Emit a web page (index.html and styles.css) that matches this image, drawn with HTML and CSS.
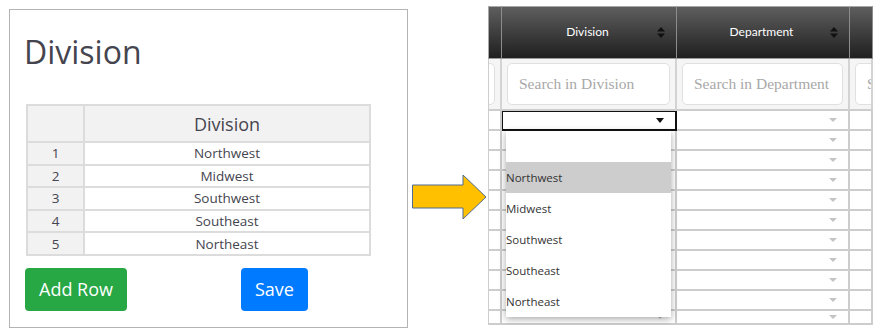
FILE: index.html
```html
<!DOCTYPE html>
<html>
<head>
<meta charset="utf-8">
<link rel="stylesheet" href="styles.css">
</head>
<body>
<div class="page">
  <section class="panel">
    <h1 class="title">Division</h1>
    <table class="sheet">
      <thead>
        <tr><th class="idx"></th><th>Division</th></tr>
      </thead>
      <tbody>
        <tr><td class="idx">1</td><td>Northwest</td></tr>
        <tr><td class="idx">2</td><td>Midwest</td></tr>
        <tr><td class="idx">3</td><td>Southwest</td></tr>
        <tr><td class="idx">4</td><td>Southeast</td></tr>
        <tr><td class="idx">5</td><td>Northeast</td></tr>
      </tbody>
    </table>
    <div class="actions">
      <button class="btn btn-green">Add Row</button>
      <button class="btn btn-blue">Save</button>
    </div>
  </section>

  <svg class="arrow" width="76" height="48" viewBox="0 0 76 48">
    <polygon points="1.5,12 52,12 52,2 75,24 52,46 52,35 1.5,35" fill="#ffc000" stroke="#4f6b93" stroke-width="1"/>
  </svg>

  <section class="grid">
    <div class="row head">
      <div class="c c0"></div>
      <div class="c c1"><span></span><span class="hlabel">Division</span><svg class="sort" width="8" height="11" viewBox="0 0 8 11"><polygon points="0,4.5 4,0 8,4.5" fill="#111"/><polygon points="0,6.5 8,6.5 4,11" fill="#111"/></svg></div>
      <div class="c c2"><span></span><span class="hlabel">Department</span><svg class="sort" width="8" height="11" viewBox="0 0 8 11"><polygon points="0,4.5 4,0 8,4.5" fill="#111"/><polygon points="0,6.5 8,6.5 4,11" fill="#111"/></svg></div>
      <div class="c c3"></div>
    </div>
    <div class="row filter">
      <div class="c c0"><div class="search search-stub"></div></div>
      <div class="c c1"><div class="search">Search in Division</div></div>
      <div class="c c2"><div class="search">Search in Department</div></div>
      <div class="c c3"><div class="search search-clip">S</div></div>
    </div>
    <div class="row body">
      <div class="c c0"></div>
      <div class="c c1 selected"><i class="caret dark"></i>
        <ul class="dropdown">
          <li></li>
          <li class="hl">Northwest</li>
          <li>Midwest</li>
          <li>Southwest</li>
          <li>Southeast</li>
          <li>Northeast</li>
        </ul>
      </div>
      <div class="c c2"><i class="caret"></i></div>
      <div class="c c3"></div>
    </div>
    <div class="row body"><div class="c c0"></div><div class="c c1"><i class="caret"></i></div><div class="c c2"><i class="caret"></i></div><div class="c c3"></div></div>
    <div class="row body"><div class="c c0"></div><div class="c c1"><i class="caret"></i></div><div class="c c2"><i class="caret"></i></div><div class="c c3"></div></div>
    <div class="row body"><div class="c c0"></div><div class="c c1"><i class="caret"></i></div><div class="c c2"><i class="caret"></i></div><div class="c c3"></div></div>
    <div class="row body"><div class="c c0"></div><div class="c c1"><i class="caret"></i></div><div class="c c2"><i class="caret"></i></div><div class="c c3"></div></div>
    <div class="row body"><div class="c c0"></div><div class="c c1"><i class="caret"></i></div><div class="c c2"><i class="caret"></i></div><div class="c c3"></div></div>
    <div class="row body"><div class="c c0"></div><div class="c c1"><i class="caret"></i></div><div class="c c2"><i class="caret"></i></div><div class="c c3"></div></div>
    <div class="row body"><div class="c c0"></div><div class="c c1"><i class="caret"></i></div><div class="c c2"><i class="caret"></i></div><div class="c c3"></div></div>
    <div class="row body"><div class="c c0"></div><div class="c c1"><i class="caret"></i></div><div class="c c2"><i class="caret"></i></div><div class="c c3"></div></div>
    <div class="row body"><div class="c c0"></div><div class="c c1"><i class="caret"></i></div><div class="c c2"><i class="caret"></i></div><div class="c c3"></div></div>
    <div class="row body last"><div class="c c0"></div><div class="c c1"><i class="caret"></i></div><div class="c c2"><i class="caret"></i></div><div class="c c3"></div></div>
  </section>
</div>
</body>
</html>
```

FILE: styles.css
```css
* { box-sizing: border-box; }
html, body { margin: 0; padding: 0; background: #fff; }
body { font-family: "Open Sans", "Liberation Sans", sans-serif; color: #444; width: 882px; height: 335px; overflow: hidden; }

.page { display: flex; align-items: flex-start; }

/* Left panel */
.panel {
  margin: 9px 0 0 9px;
  width: 399px;
  height: 319px;
  border: 1px solid #b3b3b3;
  padding: 20px 0 0 16px;
}
.title {
  margin: 0 0 0 -2px;
  font-size: 32px;
  font-weight: 400;
  line-height: 44px;
  color: #45454f;
}
.sheet {
  margin-top: 30px;
  width: 345px;
  border-collapse: collapse;
  border: 2px solid #dcdcdc;
  font-size: 13.5px;
  color: #454550;
}
.sheet th, .sheet td {
  border: 2px solid #dcdcdc;
  text-align: center;
  padding: 0;
}
.sheet th {
  height: 37px;
  font-size: 18px;
  font-weight: 400;
  background: #f2f2f2;
}
.sheet td { height: 22.6px; line-height: 18px; }
.sheet .idx { width: 57px; background: #f2f2f2; }

.actions { display: flex; margin-top: 12px; margin-left: -1px; }
.btn {
  font-family: "Open Sans", "Liberation Sans", sans-serif;
  font-size: 18px;
  line-height: 27px;
  padding: 8px 14px;
  border: 0;
  border-radius: 4px;
  color: #fff;
}
.btn-green { background: #28a745; }
.btn-blue { background: #007bff; margin-left: 114px; }

/* Arrow */
.arrow { margin: 173px 0 0 3px; flex-shrink: 0; }

/* Right grid */
.grid {
  margin: 6px 0 0 1px;
  width: 385px;
  height: 319px;
  overflow: hidden;
  flex-shrink: 0;
}
.row { display: flex; }
.c { flex-shrink: 0; border-right: 2px solid #cdcdcd; border-bottom: 2px solid #cdcdcd; }
.c0 { width: 14px; border-left: 1px solid #cdcdcd; }
.c1 { width: 175px; }
.c2 { width: 173px; }
.c3 { width: 23px; }

.head { height: 53px; }
.head .c {
  height: 53px;
  background: linear-gradient(#5e5e5e, #1f1f1f);
  border-top: 1px solid #a8a8a8;
  border-right: 1px solid #8c8c8c;
  border-bottom: 1px solid #9a9a9a;
  display: grid;
  grid-template-columns: 1fr auto 1fr;
  align-items: center;
  font-family: Lato, "Open Sans", sans-serif;
  font-size: 12px;
  color: #fff;
}
.head .c0 { border-left: 1px solid #a8a8a8; }
.head .c1, .head .c2 { padding-right: 11px; }
.head .c2 { border-right: 1px solid #8c8c8c; }
.hlabel { padding-left: 8px; padding-bottom: 2px; }
.sort { justify-self: end; }

.filter .c {
  height: 52px;
  background: #f5f5f5;
  border-right: 2px solid #d3d3d3;
  padding: 4px 5px 4px 5px;
  overflow: hidden;
  display: flex;
}
.search {
  flex: 1;
  background: #fff;
  border: 1px solid #e0e0e0;
  border-radius: 5px;
  font-family: "Liberation Serif", "DejaVu Serif", serif;
  font-size: 15.5px;
  color: #a8a8a8;
  padding-left: 11px;
  display: flex;
  align-items: center;
  white-space: nowrap;
}
.filter .c0 { padding: 4px 5px 4px 0; justify-content: flex-end; }
.search-stub { flex: 0 0 40px; }
.filter .c3 { padding-right: 0; }
.search-clip { flex: 0 0 160px; }

.body .c {
  height: 20px;
  display: flex;
  align-items: center;
  justify-content: flex-end;
  padding-right: 11px;
}
.body.last .c { height: 14px; align-items: flex-start; padding-top: 4px; }
.caret {
  display: block;
  width: 0; height: 0;
  border-left: 4px solid transparent;
  border-right: 4px solid transparent;
  border-top: 4px solid #c4c4c4;
}
.caret.dark { border-top-color: #111; border-left-width: 4.5px; border-right-width: 4.5px; border-top-width: 5px; }

.selected {
  position: relative;
  outline: 1px solid #111;
  outline-offset: -1px;
  border-color: #111;
  overflow: visible;
}
.dropdown {
  position: absolute;
  left: 4px;
  top: 20px;
  width: 165px;
  margin: 0;
  padding: 0;
  list-style: none;
  background: #fff;
  box-shadow: 0 2px 7px rgba(0, 0, 0, 0.35);
  z-index: 2;
}
.dropdown li {
  height: 31px;
  line-height: 31px;
  font-family: "Open Sans", "Liberation Sans", sans-serif;
  font-size: 11.5px;
  color: #333;
  padding-left: 0;
}
.dropdown li.hl { background: #cdcdcd; }
```
